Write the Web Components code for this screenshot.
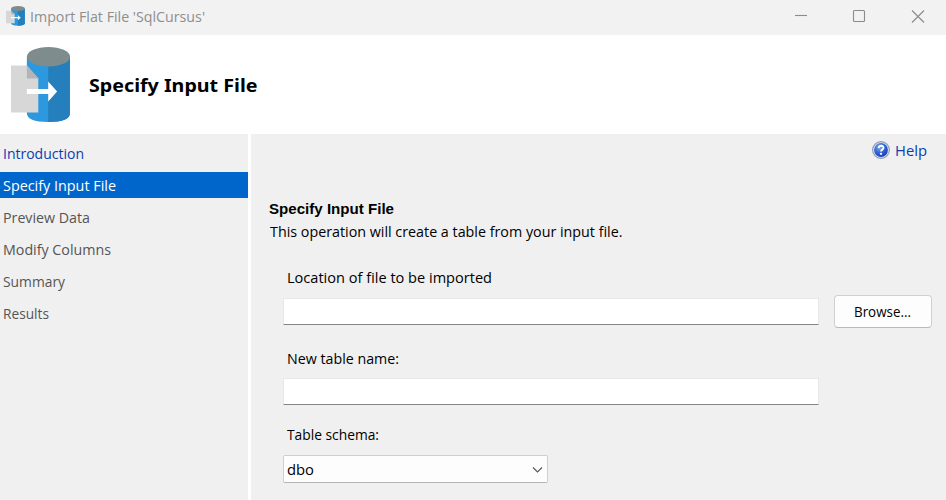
<!DOCTYPE html>
<html lang="en">
<head>
<meta charset="utf-8">
<title>Import Flat File 'SqlCursus'</title>
<style>
html,body{margin:0;height:100%;overflow:hidden}
body{font-family:"Open Sans","Noto Sans",sans-serif;font-size:14.8px;color:#000}
</style>
</head>
<body>
<import-wizard></import-wizard>
<script>
function define(name, html, setup) {
  const template = document.createElement('template');
  template.innerHTML = html;
  customElements.define(name, class extends HTMLElement {
    constructor() {
      super();
      this.attachShadow({mode: 'open'}).append(template.content.cloneNode(true));
    }
    connectedCallback() { if (setup) setup(this, this.shadowRoot); }
  });
}

/* Text fitted horizontally to the width given by its attribute. */
define('fit-text', `
<style>:host{display:block;white-space:nowrap;line-height:20px}
span{display:inline-block;transform-origin:0 50%}</style>
<span><slot></slot></span>`, (host, root) => {
  const width = Number(host.getAttribute('width'));
  const span = root.querySelector('span');
  host.style.width = width + 'px';
  const natural = span.getBoundingClientRect().width;
  if (natural) span.style.transform = 'translateY(var(--text-shift, -1px)) scaleX(' + width / natural + ')';
});

define('database-icon', `
<style>:host{display:block}svg{display:block;width:100%;height:100%}</style>
<svg viewBox="0 0 60 76" preserveAspectRatio="none">
<path d="M16 10V66Q16 75 37.500 75Q59.500 75 59.500 66V10Z" fill="#2e98df"/>
<path d="M37.500 10V75Q59.500 75 59.500 66V10Z" fill="#267fbd"/>
<ellipse cx="37.800" cy="9.700" rx="21.800" ry="9.700" fill="#7f8c8d"/>
<path d="M0 18.500H16L27.500 31.500V65.500H0Z" fill="#d7d7d7"/>
<path d="M16 18.500V31.500H27.500Z" fill="#b2b4b6"/>
<path d="M16 42H37.500V34.500L46.500 44.500L37.500 54.500V47H16Z" fill="#fff"/>
</svg>`);

define('title-bar', `
<style>:host{display:flex;height:35px;background:#f2f2f2;color:#8e8e8e;box-sizing:border-box;padding:0 21px 4px 6px;align-items:center}
database-icon{width:19px;height:20px;margin:1px 5px 0 0}fit-text{margin-top:3px}
svg{margin-left:auto;width:132px;height:16px;display:block;margin-top:1px}</style>
<database-icon></database-icon><fit-text width="175"><slot></slot></fit-text>
<svg viewBox="0 0 132 16" fill="none" stroke="#8b8b8b" stroke-width="1.100"><path d="M2 7.500h12"/><rect x="60.500" y="2.500" width="11" height="11" rx="1"/><path d="M119 2.500l12 12M131 2.500l-12 12"/></svg>`);

define('page-banner', `
<style>:host{display:flex;height:99px;background:#fff;box-sizing:border-box;padding:12px 0 0 11px;--text-shift:0px}
database-icon{width:59.500px;height:76px;margin-right:18px}
fit-text{margin-top:28px;font:bold 18.300px/20px "Noto Sans",sans-serif}</style>
<database-icon></database-icon><fit-text width="168.500"><slot></slot></fit-text>`);

define('step-item', `
<style>:host{display:flex;height:26px;box-sizing:border-box;align-items:center;padding:2px 0 0 3px;color:#555;margin-bottom:6px}
:host([state=done]){color:#0a3cb0}
:host([state=current]){background:#0066cc;color:#fff}</style>
<slot></slot>`);

define('step-list', `
<style>:host{display:block;width:248px;padding-top:6px;background:#f0f0f0;border-right:3px solid #fff}</style>
<slot></slot>`);

define('help-link', `
<style>:host{display:flex;justify-content:flex-end;align-items:center;gap:5px;color:#0a3cb0;height:20px;padding-right:19px}
svg{width:18px;height:18px;display:block;margin-bottom:2px}</style>
<svg viewBox="0 0 18 18"><defs><radialGradient id="blue" cx=".38" cy=".3" r=".75"><stop offset="0" stop-color="#7fabf2"/><stop offset=".5" stop-color="#3568da"/><stop offset="1" stop-color="#173bb0"/></radialGradient></defs>
<circle cx="9" cy="9" r="8.400" fill="#dfe4ee" stroke="#8c9bb8" stroke-width="1.100"/><circle cx="9" cy="9" r="6.900" fill="url(#blue)"/>
<path d="M6.700 7.100Q6.900 4.800 9.300 4.800Q11.600 4.900 11.500 6.800Q11.400 7.800 10.200 8.600Q9.200 9.200 9.100 10.500" fill="none" stroke="#fff" stroke-width="1.900"/><circle cx="9" cy="12.800" r="1.150" fill="#fff"/></svg>
<fit-text width="32"><slot></slot></fit-text>`);

define('text-field', `
<style>:host{display:block;width:536px;height:27px;box-sizing:border-box;background:#fff;border:1px solid #e8e8e8;border-bottom:1px solid #858585;border-radius:1px}</style>`);

define('push-button', `
<style>:host{display:flex;width:98px;height:33px;box-sizing:border-box;background:#fdfdfd;border:1px solid #d0d0d0;border-bottom-color:#bababa;border-radius:4px;align-items:center;justify-content:center;padding-right:1px}</style>
<fit-text width="57"><slot></slot></fit-text>`);

define('select-box', `
<style>:host{display:flex;width:265px;height:28px;box-sizing:border-box;background:#fdfdfd;border:1px solid #cfcfcf;border-bottom-color:#b5b5b5;border-radius:2px;align-items:center;justify-content:space-between;padding:0 4px 0 3px}
fit-text{margin-top:2px}
svg{width:11px;height:8px;display:block;margin-top:1px}</style>
<fit-text width="27"><slot></slot></fit-text>
<svg viewBox="0 0 11 8"><path d="M1 1.500L5.500 6L10 1.500" fill="none" stroke="#555" stroke-width="1.100"/></svg>`);

define('import-form', `
<style>:host{display:block;flex:1;background:#f0f0f0;padding-top:7px}
.heading{font:bold 14px/20px "Liberation Sans",sans-serif;margin:38px 0 0 18px;--text-shift:0px}
.intro{margin:3px 0 0 19px}
.fields{padding:26px 0 0 32px}
.label{margin-left:4px}
.row{display:flex;gap:15px;align-items:center;margin:7px 0 21px}
text-field.name{margin:9px 0 20px}
select-box{margin-top:10px}</style>
<help-link>Help</help-link>
<fit-text class="heading" width="125">Specify Input File</fit-text>
<fit-text class="intro" width="352.500">This operation will create a table from your input file.</fit-text>
<div class="fields">
<fit-text class="label" width="205">Location of file to be imported</fit-text>
<div class="row"><text-field></text-field><push-button>Browse...</push-button></div>
<fit-text class="label" width="112">New table name:</fit-text>
<text-field class="name"></text-field>
<fit-text class="label" width="92">Table schema:</fit-text>
<select-box>dbo</select-box>
</div>`);

define('import-wizard', `
<style>:host{display:flex;flex-direction:column;width:946px;height:500px;overflow:hidden}
main{display:flex;flex:1;min-height:0}</style>
<title-bar>Import Flat File 'SqlCursus'</title-bar>
<page-banner>Specify Input File</page-banner>
<main>
<step-list>
<step-item state="done"><fit-text width="81">Introduction</fit-text></step-item>
<step-item state="current"><fit-text width="113">Specify Input File</fit-text></step-item>
<step-item><fit-text width="87">Preview Data</fit-text></step-item>
<step-item><fit-text width="108">Modify Columns</fit-text></step-item>
<step-item><fit-text width="62">Summary</fit-text></step-item>
<step-item><fit-text width="46">Results</fit-text></step-item>
</step-list>
<import-form></import-form>
</main>`);
</script>
</body>
</html>
